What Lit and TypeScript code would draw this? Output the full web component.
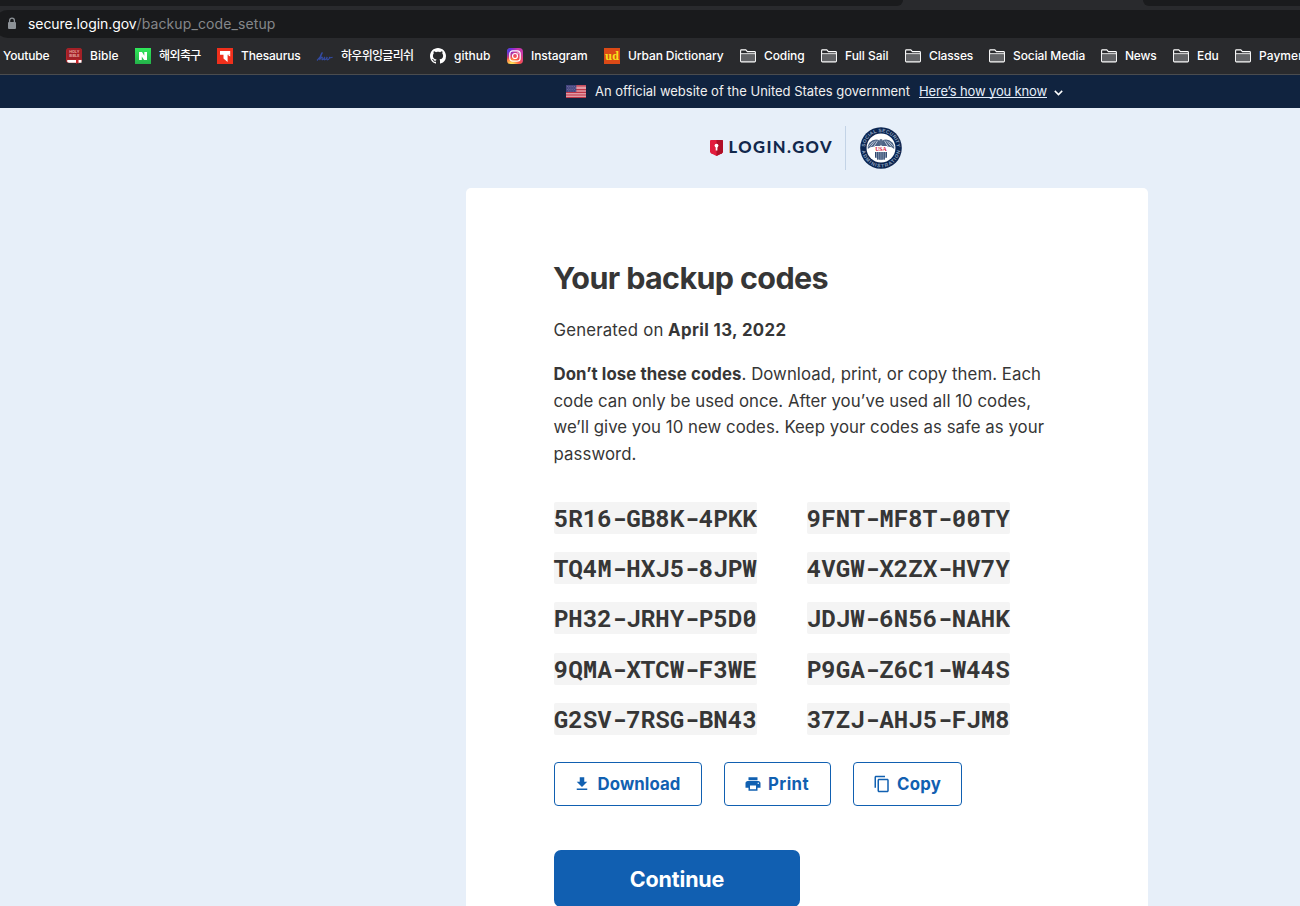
import { LitElement, html, css, svg } from "lit";
import { customElement, property } from "lit/decorators.js";

/** A single line of text whose tracking is adjusted to fill a given width. */
@customElement("fit-text")
class FitText extends LitElement {
  static styles = css`
    :host { display: inline-block; white-space: pre; }
    .line { display: inline-block; text-decoration: inherit; }
  `;
  @property() text = "";
  @property({ type: Number }) width = 0;

  render() {
    return html`<span class="line">${this.text}</span>`;
  }

  updated() {
    const line = this.renderRoot.querySelector<HTMLElement>(".line")!;
    line.style.letterSpacing = "0px";
    const natural = line.getBoundingClientRect().width;
    line.style.letterSpacing = (this.width - natural) / this.text.length + "px";
  }
}

const folder = svg`
  <path d="M1.500 6.500h13v7h-13z" fill="#626366"/>
  <path d="M.6 2.700q0-.8.8-.8h4.400l1.600 1.700h7.200q.8 0 .8.8v8.700q0 .8-.8.8H1.400q-.8 0-.8-.8zM.6 5.800h14.800" fill="none" stroke="#fff" stroke-width="1.100"/>`;

const icons: Record<string, unknown> = {
  folder,
  bible: svg`
    <rect width="16" height="15" rx="3" fill="#b4252b"/>
    <path d="M3 0h10q3 0 3 3v8.500H1V2.500Q1 0 3 0z" fill="#a32026"/>
    <path d="M1.500 12h14v2.800H3Q1.200 14.800 1 13z" fill="#fff"/>
    <path d="M10 11.500h2.500V16l-1.200-1-1.300 1z" fill="#c9252b"/>
    <text x="8.300" y="5.400" font-size="3.700" font-weight="700" text-anchor="middle" fill="#e5a3a0">HOLY</text>
    <text x="8.300" y="8.900" font-size="3.700" font-weight="700" text-anchor="middle" fill="#e5a3a0">BIBLE</text>`,
  naver: svg`
    <defs><linearGradient id="g" x2="0" y2="1"><stop stop-color="#30e95a"/><stop offset="1" stop-color="#24b24a"/></linearGradient></defs>
    <rect width="16" height="16" fill="url(#g)"/>
    <path d="M4 4h3l2.300 3.700V4H12v8H9.100L6.800 8.400V12H4z" fill="#fff"/>`,
  thesaurus: svg`
    <rect width="16" height="16" fill="#f0301c"/>
    <path d="M3 3h10.200v3.800h-2.600V14L6.500 10.600V6.800H3z" fill="#fff"/><path d="M10.600 6.800h2.600V8.500z" fill="#fff"/>`,
  hw: svg`
    <path d="M0 12.500C3 10 5 6 5.400 4.500 4.500 5.500 3 9.500 2.600 12 3.500 9.800 5 8.600 5.300 9.400 5.500 10.200 4.300 12 5.600 11.700 6.800 11.300 7.500 9.500 7.800 8.900 7.300 10.200 6.900 11.900 8 11.800 9.200 11.500 9.800 10 10.200 9 9.800 10.200 9.500 12 10.700 11.800 12 11.400 12.800 9.800 12.500 8.900 12.600 9.800 14 10 15.600 9.300" fill="none" stroke="#334ba3" stroke-width="1.150"/>`,
  github: svg`
    <path fill="#fff" d="M8 0C3.580 0 0 3.580 0 8c0 3.540 2.290 6.530 5.470 7.590.4.070.55-.17.55-.38 0-.19-.01-.82-.01-1.490-2.010.37-2.530-.49-2.690-.94-.09-.23-.48-.94-.82-1.130-.28-.15-.68-.52-.01-.53.63-.01 1.080.58 1.230.82.72 1.210 1.870.87 2.330.66.07-.52.28-.87.51-1.070-1.780-.2-3.640-.89-3.640-3.950 0-.87.31-1.590.82-2.150-.08-.2-.36-1.020.08-2.120 0 0 .67-.21 2.200.82.64-.18 1.320-.27 2-.27s1.360.09 2 .27c1.530-1.040 2.200-.82 2.200-.82.44 1.100.16 1.920.08 2.120.51.56.82 1.270.82 2.150 0 3.070-1.870 3.750-3.650 3.950.29.25.54.73.54 1.480 0 1.070-.01 1.930-.01 2.200 0 .21.15.46.55.38A8.010 8.010 0 0 0 16 8c0-4.420-3.580-8-8-8z"/>`,
  instagram: svg`
    <defs>
      <radialGradient id="a" cx=".27" cy="1.080" r="1"><stop stop-color="#fd5"/><stop offset=".15" stop-color="#fd5"/><stop offset=".5" stop-color="#ff543e"/><stop offset="1" stop-color="#c837ab"/></radialGradient>
      <radialGradient id="b" cx="-.1" cy="0" r=".75"><stop stop-color="#3050d8"/><stop offset=".3" stop-color="#4a40e0"/><stop offset="1" stop-color="#6600ff" stop-opacity="0"/></radialGradient>
    </defs>
    <rect width="16" height="16" rx="3.800" fill="url(#a)"/><rect width="16" height="16" rx="3.800" fill="url(#b)"/>
    <g fill="none" stroke="#fff" stroke-width="1.200"><rect x="2.800" y="2.800" width="10.400" height="10.400" rx="3"/><circle cx="8" cy="8" r="2.500"/></g>
    <circle cx="11" cy="5" r=".7" fill="#fff"/>`,
  urban: svg`
    <rect width="16" height="16" fill="#dc4a16"/>
    <text x="8" y="11.600" font-family="DejaVu Serif" font-size="11.500" font-weight="700" text-anchor="middle" textLength="14" lengthAdjust="spacingAndGlyphs" fill="#f6e01c">ud</text>`,
};

/** Icon name, label, label width and full width of the slot in the bar. */
const bookmarks: [string, string, number, number][] = [
  ["", "Youtube", 46.5, 63],
  ["bible", "Bible", 28.5, 69],
  ["naver", "해외축구", 41.8, 82],
  ["thesaurus", "Thesaurus", 59.5, 100],
  ["hw", "하우위잉글리쉬", 72.3, 113],
  ["github", "github", 36.5, 77],
  ["instagram", "Instagram", 56.5, 97],
  ["urban", "Urban Dictionary", 95.5, 136],
  ["folder", "Coding", 40.5, 81],
  ["folder", "Full Sail", 43.5, 84],
  ["folder", "Classes", 44.2, 84],
  ["folder", "Social Media", 72.2, 112],
  ["folder", "News", 31.5, 72],
  ["folder", "Edu", 21.7, 62],
  ["folder", "Payments", 57, 110],
];

@customElement("browser-chrome")
class BrowserChrome extends LitElement {
  static styles = css`
    :host { display: block; background: #292a2d; border-bottom: 1px solid #4b4c4e; font-family: Inter, "Noto Sans CJK KR", sans-serif; color: #fff; }
    .tabs { height: 10px; display: flex; justify-content: space-between; align-items: flex-start; }
    .tab { height: 6px; background: #1a1b1d; }
    .left { width: 903px; border-bottom-right-radius: 6px; }
    .right { width: 157px; border-bottom-left-radius: 6px; }
    .url { height: 28px; background: #191a1c; border-radius: 14px 0 0 14px; margin-left: -6px; padding-left: 13px; display: flex; align-items: center; font-size: 14px; line-height: 28px; }
    .lock { width: 10px; height: 13px; margin: -2px 11px 0 0; }
    .path { color: #85878a; }
    .marks { height: 36px; display: flex; overflow: hidden; padding-left: 3px; font-size: 12px; line-height: 35px; font-weight: 500; }
    .mark { flex: none; display: flex; gap: 8px; align-items: flex-start; white-space: nowrap; }
    .icon { width: 16px; height: 16px; margin-top: 10px; flex: none; overflow: visible; }
  `;
  render() {
    return html`
      <div class="tabs"><div class="tab left"></div><div class="tab right"></div></div>
      <div class="url">
        <svg class="lock" viewBox="0 0 10 13"><path d="M2.600 6V3.500a2.400 2.400 0 0 1 4.800 0V6" fill="none" stroke="#8d9297" stroke-width="1.300"/><rect x="1" y="5" width="8" height="7" rx="1" fill="#8d9297"/></svg>
        <fit-text text="secure.login.gov" width="108.500"></fit-text><fit-text class="path" text="/backup_code_setup" width="139"></fit-text>
      </div>
      <div class="marks">
        ${bookmarks.map(([icon, label, width, slot]) => html`
          <div class="mark" style="width:${slot}px">
            ${icon ? html`<svg class="icon" viewBox="0 0 16 16">${icons[icon]}</svg>` : ""}
            <fit-text .text=${label} .width=${width}></fit-text>
          </div>`)}
      </div>`;
  }
}

@customElement("gov-banner")
class GovBanner extends LitElement {
  static styles = css`
    :host { display: flex; height: 33px; background: #10233f; color: #f0f0f0; font: 400 13px/33px Inter, sans-serif; padding-left: 566px; align-items: center; }
    .flag { width: 20px; height: 13px; margin-right: 9px; flex: none; }
    .lead { margin-right: 9px; }
    .how { color: #e4eefb; border-bottom: 1px solid #e4eefb; line-height: 13px; height: 12px; margin-right: 7px; }
    .chev { width: 9px; height: 6px; margin-top: 3px; }
  `;
  render() {
    return html`
      <svg class="flag" viewBox="0 0 20 13">
        <rect width="20" height="13" fill="#e09aa5"/>
        <path d="M0 .9h20M0 4.700h20M0 7.400h20M0 10h20M0 12.500h20" stroke="#bd3547" stroke-width="1.200"/>
        <rect width="10.300" height="7" fill="#45457f"/>
        <path d="M1 1.500h9M2 3h8M1 4.500h9M2 6h8" stroke="#8886ae" stroke-width=".7" stroke-dasharray=".8 1"/>
      </svg>
      <fit-text class="lead" text="An official website of the United States government" width="315"></fit-text>
      <fit-text class="how" text="Here’s how you know" width="128"></fit-text>
      <svg class="chev" viewBox="0 0 9 6"><path d="M.8.9l3.700 3.700L8.200.9" fill="none" stroke="#fff" stroke-width="1.500"/></svg>`;
  }
}

@customElement("brand-header")
class BrandHeader extends LitElement {
  static styles = css`
    :host { display: flex; height: 80px; padding-left: 710px; align-items: center; }
    .shield { width: 13px; height: 16px; margin-right: 5.500px; flex: none; }
    .name { font: 900 16.500px/20px Lato, sans-serif; color: #12284c; margin-top: -2px; }
    .rule { width: 1px; height: 44px; background: #c3d3e6; margin: 0 14px 0 12px; }
    .seal { width: 42px; height: 42px; flex: none; }
  `;
  render() {
    const stripes = [0, 1, 2, 3, 4, 5].map((i) => svg`<path d="M${16.1 + i * 2.15} 25.500v${i === 0 || i === 5 ? 6 : 8}" stroke="#17315c" stroke-width="1.200"/>`);
    return html`
      <svg class="shield" viewBox="0 0 13 16">
        <path d="M0 1q0-1 1-1h11q1 0 1 1v10.500q0 1-1 1.700L6.500 16 1 13.200q-1-.7-1-1.700z" fill="#e21c3d"/>
        <path d="M6.500 0H12q1 0 1 1v10.500q0 1-1 1.700L6.500 16z" fill="#b00f27"/>
        <circle cx="6.500" cy="5.600" r="1.900" fill="#fff"/><path d="M5.700 6h1.700v4.500H5.700z" fill="#fff"/>
      </svg>
      <fit-text class="name" text="LOGIN.GOV" width="104.500"></fit-text>
      <div class="rule"></div>
      <svg class="seal" viewBox="0 0 43 43">
        <circle cx="21.500" cy="21.500" r="21.300" fill="#0b2551"/>
        <circle cx="21.500" cy="21.500" r="14.800" fill="#fff"/>
        <defs><path id="top" d="M5.200 21.500a16.300 16.300 0 0 1 32.600 0"/><path id="low" d="M1.700 21.500a19.800 19.800 0 0 0 39.600 0"/></defs>
        <g font-family="Liberation Sans" font-size="5" font-weight="700" fill="#8fa3bf">
          <text textLength="49"><textPath href="#top" startOffset="1">SOCIAL SECURITY</textPath></text>
          <text textLength="56"><textPath href="#low" startOffset="3">ADMINISTRATION</textPath></text>
        </g>
        <path d="M20.500 14Q15 11 9.500 16 7.500 18.500 8 22.500 11 19.500 16 20.500l4.500 1.500zM22.500 14Q28 11 33.500 16 35.500 18.500 35 22.500 32 19.500 27 20.500l-4.500 1.500z" fill="#4e6485"/>
        <path d="M8.500 20l5-5M11 20l5-6M14 20.500l4-6.500M34.500 20l-5-5M32 20l-5-6M29 20.500l-4-6.500" stroke="#dce4ee" stroke-width=".8"/>
        <path d="M20 13q1.500-1.500 3 0v6h-3z" fill="#5a6f8d"/>
        <path d="M15 19.500h13v9q0 4-6.500 6-6.500-2-6.500-6z" fill="#fff"/>
        <path d="M15.500 25.500h12v3.500q0 3.500-6 5-6-1.500-6-5z" fill="#b8c4d4"/>
        ${stripes}
        <text x="21.500" y="24.800" text-anchor="middle" textLength="12" lengthAdjust="spacingAndGlyphs" font-family="Liberation Serif" font-size="7" font-weight="700" fill="#d9263e">USA</text>
      </svg>`;
  }
}

const codes = [
  "5R16-GB8K-4PKK", "9FNT-MF8T-00TY",
  "TQ4M-HXJ5-8JPW", "4VGW-X2ZX-HV7Y",
  "PH32-JRHY-P5D0", "JDJW-6N56-NAHK",
  "9QMA-XTCW-F3WE", "P9GA-Z6C1-W44S",
  "G2SV-7RSG-BN43", "37ZJ-AHJ5-FJM8",
];

@customElement("app-root")
class AppRoot extends LitElement {
  static styles = css`
    :host { display: block; height: 906px; overflow: hidden; background: #e7eff9; }
    .card { box-sizing: border-box; width: 682px; height: 730px; margin-left: 466px; padding: 70px 88px 0; background: #fff; border-radius: 5px 5px 0 0; color: #363636; font: 400 16.800px/26.400px Inter, sans-serif; }
    .title { margin: 0 0 0 -1px; font-size: 30.500px; line-height: 40px; font-weight: 700; }
    .line { margin: 0 0 0 -.5px; display: flex; white-space: pre; }
    .date { margin-top: 18.800px; gap: 4.500px; }
    .warn { margin-top: 18.150px; }
    .strong { font-weight: 700; }
    .codes { display: grid; grid-template-columns: 203px 203px; column-gap: 50px; row-gap: 18.250px; margin-top: 34.950px; }
    .code { height: 32px; border-radius: 2px; background: #f4f4f4; font: 700 24.170px/32px "Roboto Mono", "Liberation Mono", monospace; white-space: nowrap; text-indent: -.3px; }
    .tools { display: flex; gap: 22px; margin-top: 27.200px; }
    .btn { box-sizing: border-box; height: 44px; border: 1px solid #1160b1; border-radius: 4px; display: flex; align-items: center; padding: 0 0 0 19px; color: #1160b1; font-weight: 700; }
    .download { width: 148px; padding-left: 18px; }
    .download .glyph { margin-right: 6.500px; }
    .print { width: 107px; }
    .copy { width: 109px; }
    .glyph { width: 18px; height: 18px; margin-right: 6px; flex: none; fill: currentColor; }
    .continue { box-sizing: border-box; width: 246px; height: 57px; padding-top: 2px; margin-top: 44px; border-radius: 7px; background: #115fb1; color: #fff; font-size: 21.500px; font-weight: 700; display: flex; align-items: center; justify-content: center; }
  `;
  render() {
    return html`
      <browser-chrome></browser-chrome>
      <gov-banner></gov-banner>
      <brand-header></brand-header>
      <main class="card">
        <h1 class="title"><fit-text text="Your backup codes" width="275"></fit-text></h1>
        <p class="line date"><fit-text text="Generated on" width="110"></fit-text><fit-text class="strong" text="April 13, 2022" width="118.500"></fit-text></p>
        <div class="warn">
          <p class="line"><fit-text class="strong" text="Don’t lose these codes" width="188"></fit-text><fit-text text=". Download, print, or copy them. Each" width="299.500"></fit-text></p>
          <p class="line"><fit-text text="code can only be used once. After you’ve used all 10 codes," width="477.500"></fit-text></p>
          <p class="line"><fit-text text="we’ll give you 10 new codes. Keep your codes as safe as your" width="490.500"></fit-text></p>
          <p class="line"><fit-text text="password." width="83"></fit-text></p>
        </div>
        <div class="codes">${codes.map((c) => html`<div class="code">${c}</div>`)}</div>
        <div class="tools">
          <div class="btn download"><svg class="glyph" viewBox="0 0 24 24"><path d="M19 9h-4V3H9v6H5l7 7 7-7zM5 18v2h14v-2H5z"/></svg><fit-text text="Download" width="83"></fit-text></div>
          <div class="btn print"><svg class="glyph" viewBox="0 0 24 24"><path d="M19 8H5c-1.660 0-3 1.340-3 3v6h4v4h12v-4h4v-6c0-1.660-1.340-3-3-3zm-3 11H8v-5h8v5zm3-7c-.55 0-1-.45-1-1s.45-1 1-1 1 .45 1 1-.45 1-1 1zm-1-9H6v4h12V3z"/></svg><fit-text text="Print" width="41"></fit-text></div>
          <div class="btn copy"><svg class="glyph" viewBox="0 0 24 24"><path d="M16 1H4c-1.100 0-2 .9-2 2v14h2V3h12V1zm3 4H8c-1.100 0-2 .9-2 2v14c0 1.100.9 2 2 2h11c1.100 0 2-.9 2-2V7c0-1.100-.9-2-2-2zm0 16H8V7h11v14z"/></svg><fit-text text="Copy" width="44"></fit-text></div>
        </div>
        <div class="continue"><fit-text text="Continue" width="94.500"></fit-text></div>
      </main>`;
  }
}
